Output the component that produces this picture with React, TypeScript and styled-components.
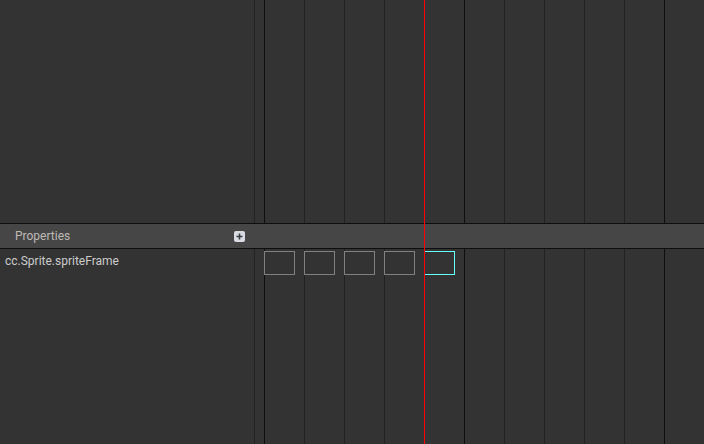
import React from "react";
import styled, { createGlobalStyle } from "styled-components";

const Global = createGlobalStyle`
  html, body { margin: 0; padding: 0; background: #333333; }
  body { font-family: Roboto, "Noto Sans", "Liberation Sans", sans-serif; overflow: hidden; }
`;

const Editor = styled.div`
  position: relative;
  width: 704px;
  height: 444px;
  display: flex;
  flex-direction: column;
  background: #333333;
  overflow: hidden;
`;

const Pane = styled.div<{ $height?: number }>`
  display: flex;
  flex-direction: row;
  ${(p) => (p.$height ? `height: ${p.$height}px; flex: none;` : `flex: 1;`)}
  min-height: 0;
`;

const Sidebar = styled.div`
  width: 254px;
  flex: none;
  border-right: 1px solid #222222;
  background: #333333;
`;

const Timeline = styled.div`
  flex: 1;
  background:
    linear-gradient(to right, #0e0e0e 0 1px, transparent 1px) 9px 0 / 200px 100% repeat-x,
    linear-gradient(to right, #222222 0 1px, transparent 1px) 9px 0 / 40px 100% repeat-x,
    #333333;
`;

const SectionHeader = styled.div`
  height: 24px;
  flex: none;
  display: flex;
  background: #464646;
  border-top: 1px solid #0e0e0e;
  border-bottom: 1px solid #0e0e0e;
`;

const HeaderLeft = styled.div`
  width: 254px;
  display: flex;
  align-items: center;
  justify-content: space-between;
  padding: 0 9px 0 15px;
  box-sizing: border-box;
`;

const HeaderTitle = styled.span`
  font-size: 12px;
  color: #bdbab5;
`;

const AddButton = styled.span`
  width: 11px;
  height: 11px;
  display: inline-flex;
  margin-top: 1px;
`;

const PropLabel = styled.div`
  height: 24px;
  line-height: 24px;
  padding-left: 5px;
  font-size: 12px;
  color: #cccccc;
  white-space: nowrap;
`;

const Track = styled.div`
  display: flex;
  gap: 9px;
  padding: 2px 0 0 9px;
`;

const KeyFrame = styled.div<{ $selected?: boolean }>`
  width: 31px;
  height: 24px;
  box-sizing: border-box;
  border: 1px solid ${(p) => (p.$selected ? "#66ffff" : "#808080")};
  background: #333333;
  flex: none;
`;

const Playhead = styled.div`
  position: absolute;
  left: 424px;
  top: 0;
  bottom: 0;
  width: 1px;
  background: #ff0000;
  z-index: 5;
`;

export default function App() {
  const frames = [0, 1, 2, 3, 4];
  return (
    <>
      <Global />
      <Editor>
        <Pane $height={223}>
          <Sidebar />
          <Timeline />
        </Pane>
        <SectionHeader>
          <HeaderLeft>
            <HeaderTitle>Properties</HeaderTitle>
            <AddButton>
              <svg width="11" height="11" viewBox="0 0 11 11">
                <rect x="0" y="0" width="11" height="11" rx="2" fill="#d9dde3" />
                <path d="M5.5 2.5v6M2.5 5.5h6" stroke="#3a3d42" strokeWidth="1.6" />
              </svg>
            </AddButton>
          </HeaderLeft>
        </SectionHeader>
        <Pane>
          <Sidebar>
            <PropLabel>cc.Sprite.spriteFrame</PropLabel>
          </Sidebar>
          <Timeline>
            <Track>
              {frames.map((f) => (
                <KeyFrame key={f} $selected={f === 4} />
              ))}
            </Track>
          </Timeline>
        </Pane>
        <Playhead />
      </Editor>
    </>
  );
}
